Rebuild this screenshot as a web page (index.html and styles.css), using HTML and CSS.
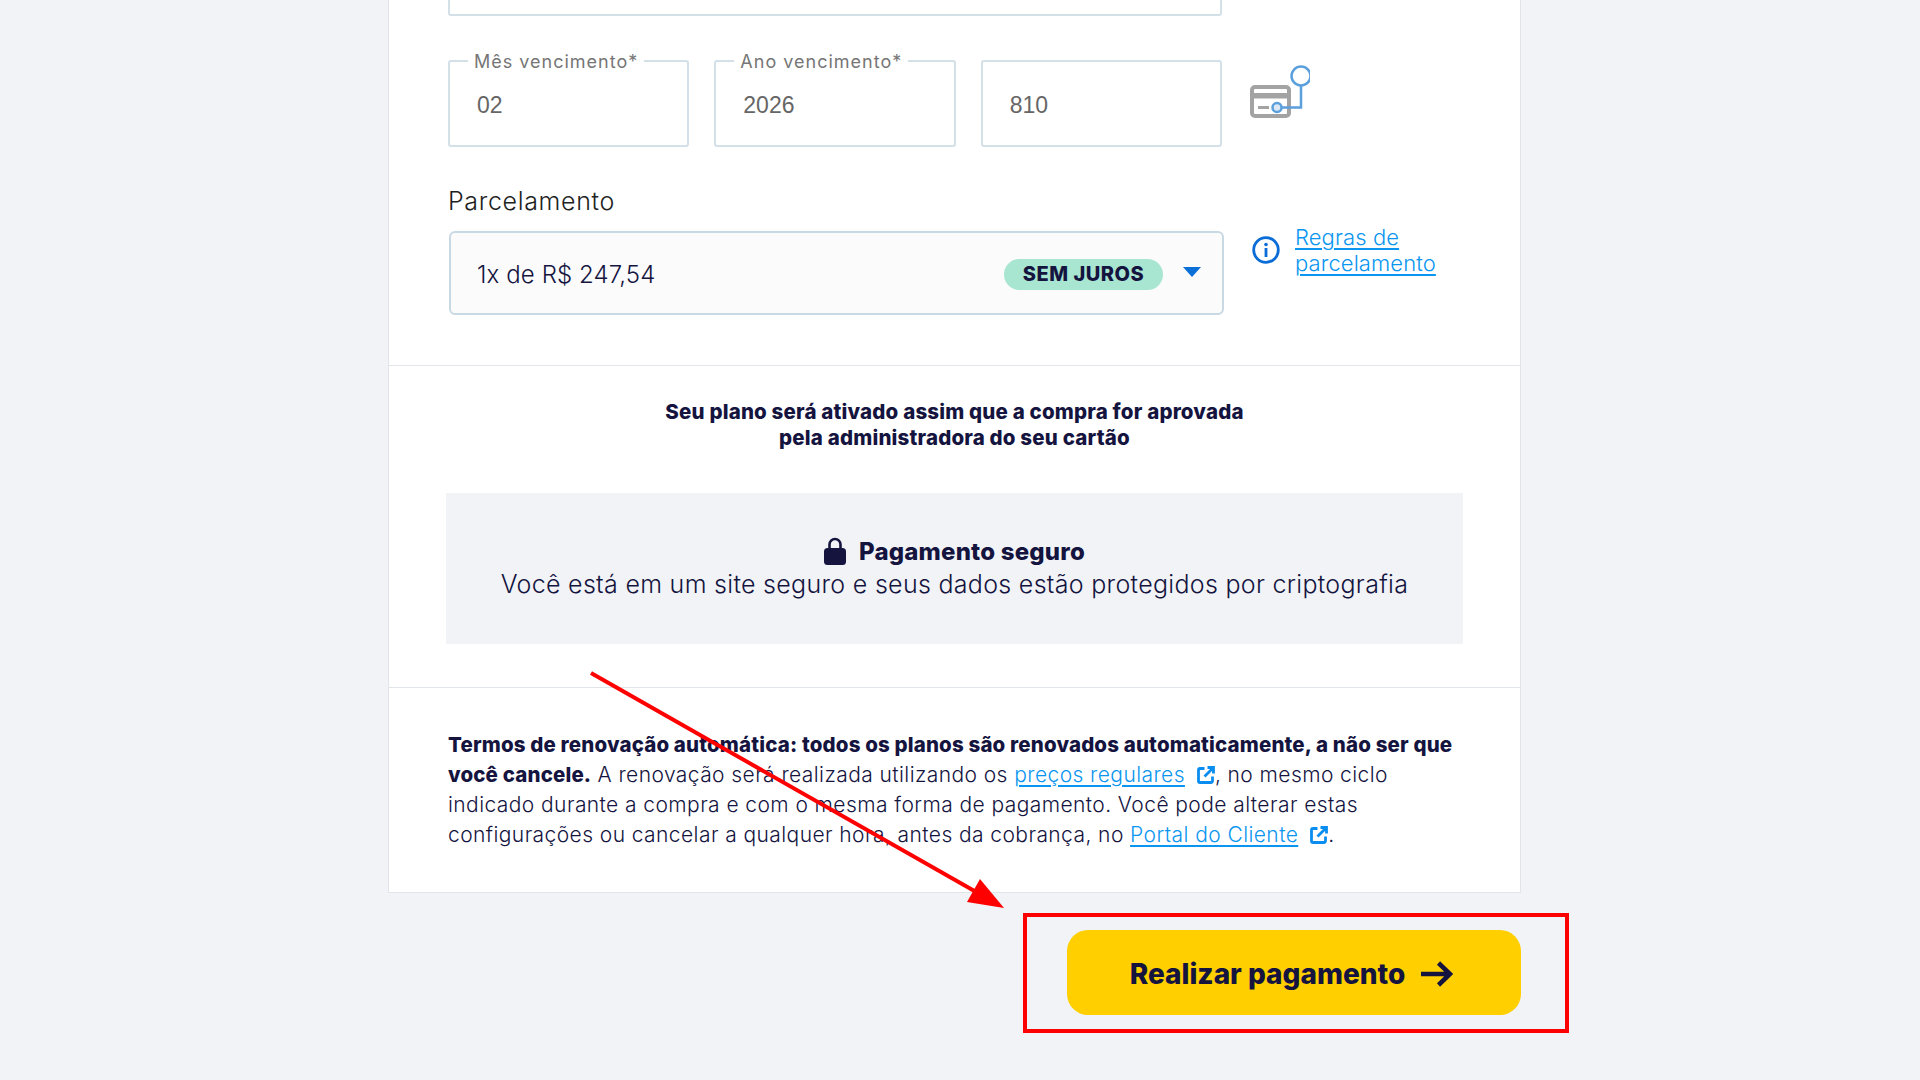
FILE: index.html
```html
<!DOCTYPE html>
<html lang="pt-BR">
<head>
<meta charset="utf-8">
<title>Pagamento</title>
<link rel="stylesheet" href="styles.css">
</head>
<body>
<main class="page">
  <div class="card">
    <section class="form-section">
      <div class="field field-cut"></div>
      <div class="fields-row">
        <div class="fields">
          <div class="field"><span class="field-label">Mês vencimento*</span><span class="field-value">02</span></div>
          <div class="field"><span class="field-label">Ano vencimento*</span><span class="field-value">2026</span></div>
          <div class="field"><span class="field-value">810</span></div>
        </div>
        <svg class="cvv-icon" width="60" height="70" viewBox="0 0 60 70" aria-hidden="true">
          <rect x="2" y="25" width="37" height="29" rx="3" fill="none" stroke="#a3a3a3" stroke-width="4"/>
          <rect x="2" y="31" width="37" height="5.5" fill="#a3a3a3"/>
          <rect x="8" y="44" width="11" height="3" fill="#a3a3a3"/>
          <circle cx="51" cy="14" r="9.5" fill="#fff" stroke="#5b9fdc" stroke-width="2.5"/>
          <path d="M51 23.5V45.5H32" fill="none" stroke="#5b9fdc" stroke-width="2.5"/>
          <circle cx="27" cy="45.5" r="4.5" fill="#dce9f5" stroke="#5b9fdc" stroke-width="2.5"/>
        </svg>
      </div>
      <div class="install-label">Parcelamento</div>
      <div class="install-row">
        <div class="select">
          <span class="select-text">1x de R$ 247,54</span>
          <span class="badge">SEM JUROS</span>
          <span class="caret"></span>
        </div>
        <svg class="info-icon" width="28" height="28" viewBox="0 0 28 28" aria-hidden="true">
          <circle cx="14" cy="14" r="12.3" fill="none" stroke="#0a6cd6" stroke-width="2.8"/>
          <rect x="12.6" y="12" width="2.8" height="9" fill="#0a6cd6"/>
          <circle cx="14" cy="8.5" r="1.8" fill="#0a6cd6"/>
        </svg>
        <a class="link rules" href="#">Regras de<br>parcelamento</a>
      </div>
    </section>
    <section class="secure-section">
      <p class="notice">Seu plano será ativado assim que a compra for aprovada<br>pela administradora do seu cartão</p>
      <div class="secure-box">
        <div class="secure-title">
          <svg width="22" height="28" viewBox="0 0 22 28" aria-hidden="true">
            <path d="M5.5 13V7.5a5.5 5.5 0 0 1 11 0V13" fill="none" stroke="#14143f" stroke-width="2.6"/>
            <rect x="0" y="11" width="22" height="17" rx="3.5" fill="#14143f"/>
          </svg>
          <span>Pagamento seguro</span>
        </div>
        <div class="secure-text">Você está em um site seguro e seus dados estão protegidos por criptografia</div>
      </div>
    </section>
    <section class="terms-section">
      <p class="terms"><strong>Termos de renovação automática: todos os planos são renovados automaticamente, a não ser que<br>você cancele.</strong> A renovação será realizada utilizando os <a class="link" href="#">preços regulares</a><svg class="ext" width="18" height="18" viewBox="0 0 18 18" aria-hidden="true"><path d="M7.5 2.5H3A1.5 1.5 0 0 0 1.5 4v11A1.5 1.5 0 0 0 3 16.500h11a1.500 1.500 0 0 0 1.500-1.500V10.500M10.500 1.500H16.500V7.500M16 2L7.500 10.500" fill="none" stroke="#0a8df0" stroke-width="2.800"/></svg>, no mesmo ciclo<br>indicado durante a compra e com o mesma forma de pagamento. Você pode alterar estas<br>configurações ou cancelar a qualquer hora, antes da cobrança, no <a class="link" href="#">Portal do Cliente</a><svg class="ext" width="18" height="18" viewBox="0 0 18 18" aria-hidden="true"><path d="M7.5 2.5H3A1.5 1.5 0 0 0 1.5 4v11A1.5 1.5 0 0 0 3 16.500h11a1.500 1.500 0 0 0 1.500-1.500V10.500M10.500 1.500H16.500V7.500M16 2L7.500 10.500" fill="none" stroke="#0a8df0" stroke-width="2.800"/></svg>.</p>
    </section>
  </div>
  <div class="actions">
    <button class="pay" type="button">
      <span>Realizar pagamento</span>
      <svg width="32" height="26" viewBox="0 0 32 26" aria-hidden="true"><path d="M0 13H29M17.500 2L29 13L17.500 24" fill="none" stroke="#14143f" stroke-width="4.500"/></svg>
    </button>
  </div>
</main>
<div class="mark-box"></div>
<svg class="mark-arrow" width="1920" height="1080" viewBox="0 0 1920 1080" aria-hidden="true">
  <path d="M591 673L985 897" fill="none" stroke="#ff0000" stroke-width="4"/>
  <path d="M1004 908L980 879L967 902Z" fill="#ff0000"/>
</svg>
</body>
</html>
```

FILE: styles.css
```css
* { box-sizing: border-box; }
html, body { margin: 0; height: 1080px; overflow: hidden; background: #f1f3f6; }
body { font-family: Inter, "Liberation Sans", sans-serif; color: #14143f; position: relative; }
.page { width: 1133px; margin-left: 388px; display: flex; flex-direction: column; }
.card { background: #fff; border: 1px solid #e1e5ea; border-top: 0; }
.form-section { padding: 0 59px 50px; border-bottom: 1px solid #e1e5ea; }
.field { position: relative; height: 87px; border: 2px solid #d3e0e8; border-radius: 3px; padding: 30px 27px 0; }
.field-cut { height: 16px; width: 774px; border-top: 0; border-radius: 0 0 3px 3px; padding: 0; }
.fields-row { display: flex; align-items: flex-start; gap: 28px; margin-top: 44px; }
.fields { display: grid; grid-template-columns: repeat(3, 1fr); gap: 25px; width: 774px; }
.field-label { position: absolute; top: -11px; left: 18px; padding: 0 6px; background: #fff; font-size: 18px; font-weight: 400; letter-spacing: 1px; line-height: 22px; color: #767676; white-space: nowrap; }
.field-value { font-family: "Liberation Sans", sans-serif; font-size: 23px; line-height: 26px; color: #666; }
.cvv-icon { margin-top: 2px; }
.install-label { margin-top: 39px; font-size: 25px; font-weight: 300; letter-spacing: 0.65px; line-height: 30px; color: #222; }
.install-row { display: flex; align-items: flex-start; margin-top: 15px; }
.select { display: flex; align-items: center; width: 775px; height: 84px; margin-left: 1px; padding: 0 21px 0 26px; border: 2px solid #c9d9e4; border-radius: 6px; background: #fbfbfb; }
.select-text { flex: 1; font-size: 24px; font-weight: 300; letter-spacing: 0.1px; padding-top: 3px; }
.badge { width: 159px; height: 31px; border-radius: 16px; background: #a8e6d1; font-size: 20px; font-weight: 800; letter-spacing: 0.5px; line-height: 31px; text-align: center; margin-top: 3px; }
.caret { width: 0; height: 0; margin-left: 20px; margin-bottom: 2px; border-left: 9.5px solid transparent; border-right: 9.5px solid transparent; border-top: 10px solid #0a6fd6; }
.info-icon { margin: 5px 15px 0 28px; flex: none; }
.link { color: #0a96f0; text-decoration: underline; text-underline-offset: 3px; }
.rules { font-size: 22px; font-weight: 300; letter-spacing: 0.1px; line-height: 26px; margin-top: -7px; }
.secure-section { padding: 33px 57px 43px 57px; border-bottom: 1px solid #e1e5ea; }
.notice { margin: 0; font-size: 20.5px; font-weight: 800; letter-spacing: 0.18px; line-height: 26px; text-align: center; }
.secure-box { height: 151px; margin-top: 42px; padding-top: 42px; background: #f1f3f6; text-align: center; }
.secure-title { display: flex; justify-content: center; align-items: center; gap: 13px; height: 32px; font-size: 24px; font-weight: 800; letter-spacing: 0.2px; }
.secure-text { font-size: 25px; font-weight: 300; letter-spacing: 0.3px; line-height: 35px; }
.terms-section { padding: 42px 30px 42px 59px; }
.terms { margin: 0; font-size: 21px; font-weight: 300; letter-spacing: 0.42px; line-height: 30px; white-space: nowrap; }
.terms strong { font-size: 20.5px; font-weight: 800; letter-spacing: 0.15px; }
.ext { margin: 0 0 -2px 12px; vertical-align: baseline; }
.actions { display: flex; justify-content: flex-end; margin-top: 37px; }
.pay { display: flex; align-items: center; justify-content: center; gap: 16px; width: 454px; height: 85px; padding: 2px 5px 0 0; border: 0; border-radius: 21px; background: #ffcf00; color: #14143f; font-family: inherit; font-size: 28px; font-weight: 800; }
.mark-box { position: absolute; left: 1023px; top: 913px; width: 546px; height: 120px; border: 4px solid #f00; }
.mark-arrow { position: absolute; left: 0; top: 0; pointer-events: none; }
```
